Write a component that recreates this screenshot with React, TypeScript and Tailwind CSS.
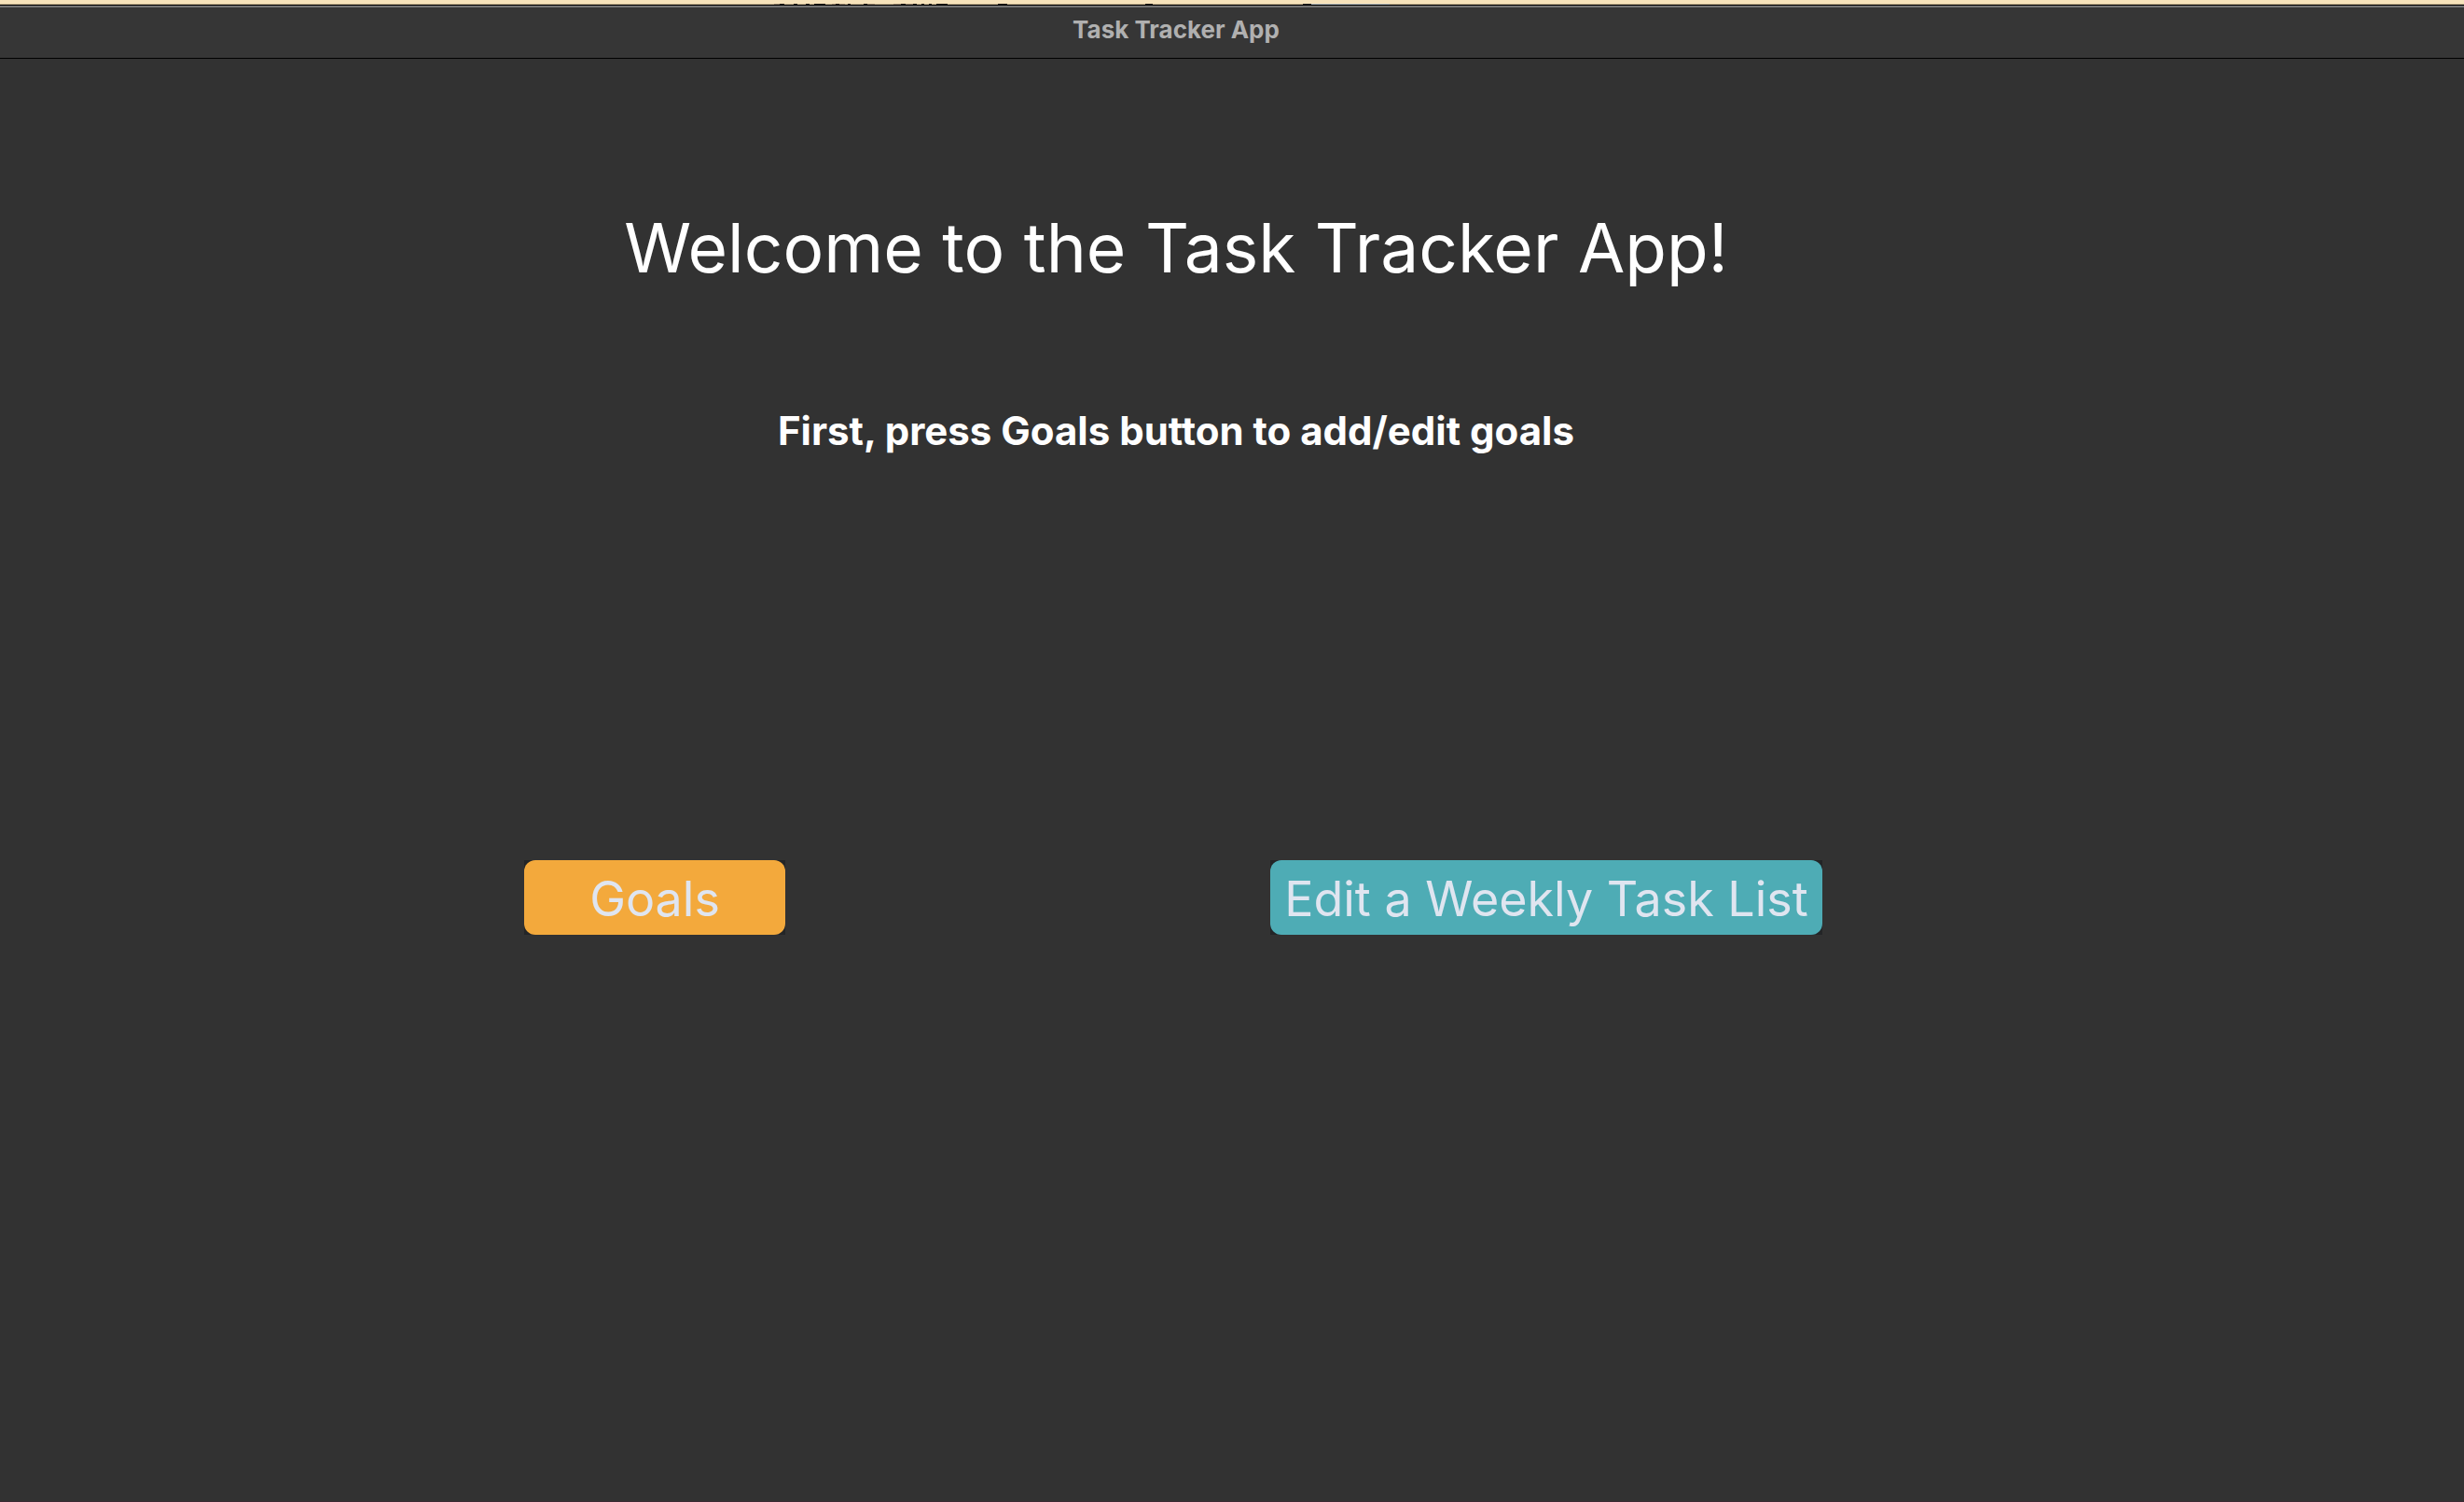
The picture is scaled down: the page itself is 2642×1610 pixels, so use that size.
function ActionButton({ label, className }: { label: string; className: string }) {
  return (
    <span className="flex bg-[#232527]">
      <button
        type="button"
        className={`h-20 rounded-xl pt-1 text-[52px] leading-none whitespace-nowrap text-[#dfe5f0] ${className}`}
      >
        {label}
      </button>
    </span>
  );
}

// Tops of the content behind the window, as [start, length, colour].
const fragments: [number, number, string][] = [
  [6, 10, "#8f7f68"],
  [12, 5, "#1d1512"],
  [27, 4, "#1d1512"],
  [40, 4, "#1d1512"],
  [49, 12, "#120d0b"],
  [68, 14, "#9a876e"],
  [72, 4, "#2a1f1a"],
  [85, 3, "#2a1f1a"],
  [102, 12, "#9a876e"],
  [102, 4, "#1d1512"],
  [134, 22, "#9a876e"],
  [142, 5, "#1d1512"],
  [155, 4, "#1d1512"],
  [164, 3, "#1d1512"],
  [172, 3, "#1d1512"],
  [180, 12, "#1d1512"],
  [246, 10, "#120d0b"],
  [404, 8, "#1d1512"],
  [573, 9, "#222222"],
  [582, 84, "#b3bcbf"],
];

export default function App() {
  return (
    <div className="flex min-h-screen flex-col border-b border-[#3a2a33] bg-[#323232] font-['Inter',sans-serif]">
      <div className="bg-[#f7e3bb] pt-1">
        <div className="bg-[#c5b28f] pl-[824px]">
          <svg width="670" height="1" className="block" aria-hidden="true">
            {fragments.map(([x, w, fill], i) => (
              <rect key={i} x={x} width={w} height="1" fill={fill} />
            ))}
          </svg>
        </div>
      </div>
      <header className="flex h-[58px] items-center justify-center border-y border-black bg-[#363636] pr-[120px] pb-1 shadow-[inset_0_2px_0_#747474]">
        <h1 className="text-[26px] leading-8 font-bold text-[#b0b0b0]">Task Tracker App</h1>
      </header>
      <main className="flex grow flex-col items-center pr-[120px] text-white">
        <h2 className="mt-[155px] text-[73px] leading-[96px]">Welcome to the Task Tracker App!</h2>
        <p className="mt-[120px] text-[42px] leading-[56px] font-bold">First, press Goals button to add/edit goals</p>
        <div className="mt-[432px] flex justify-center gap-[520px] pr-1.5">
          <ActionButton label="Goals" className="w-[280px] bg-[#f3a93c]" />
          <ActionButton label="Edit a Weekly Task List" className="w-[592px] bg-[#4eacb5]" />
        </div>
      </main>
    </div>
  );
}
